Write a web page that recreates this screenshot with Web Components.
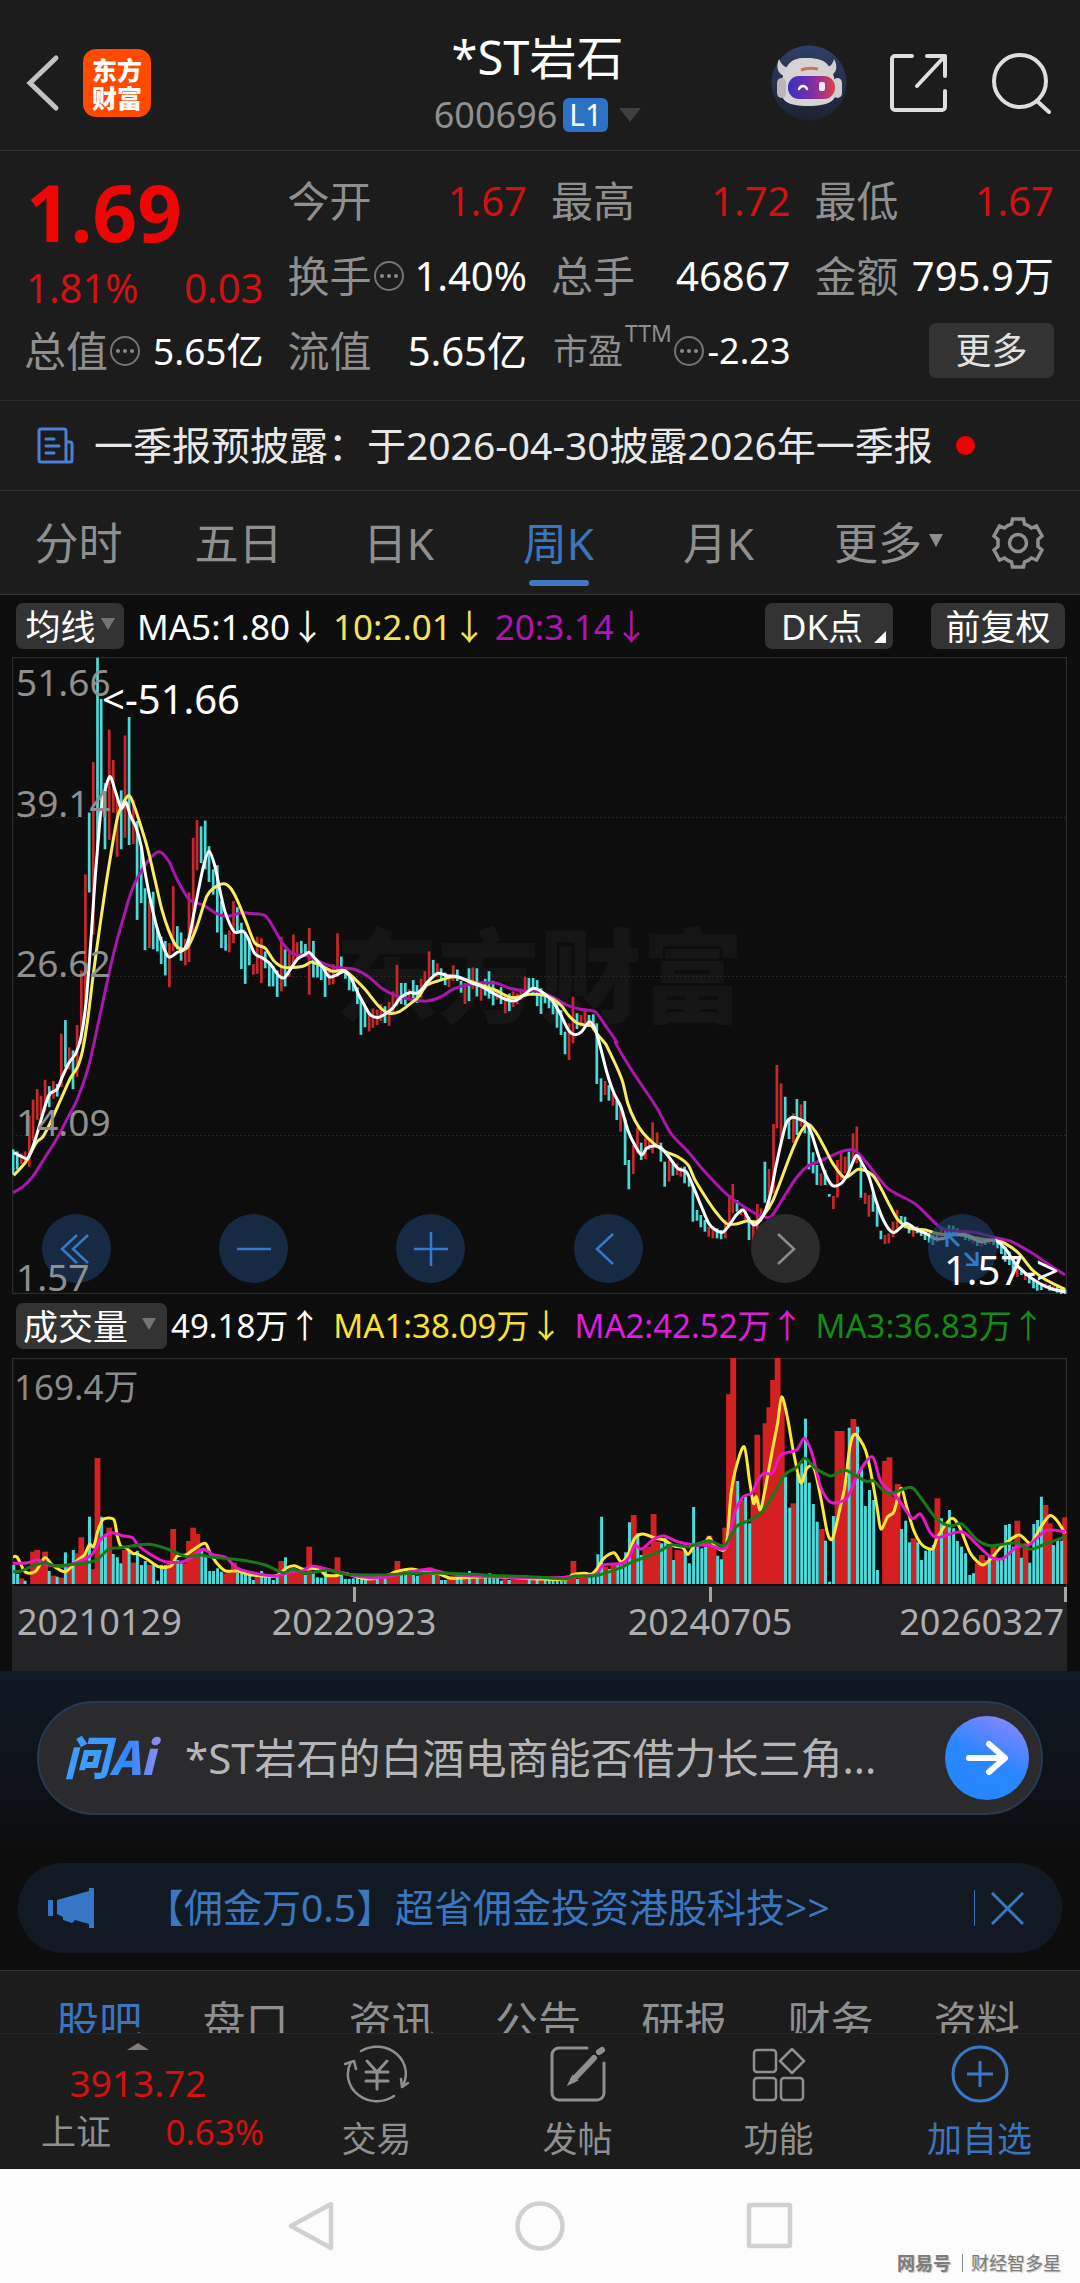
<!DOCTYPE html>
<html lang="zh-CN">
<head>
<meta charset="utf-8">
<meta name="viewport" content="width=device-width, initial-scale=1">
<title>*ST岩石 600696</title>
<style>
  body { margin: 0; background: #0d0d0d; color: #fff; font-family: "Noto Sans", "Noto Sans CJK SC", sans-serif; --panel: #1c1c1c; --line: #333; --chip: #333; --mute: #8f8f8f; --blue: #3a75bd; --red: #d01212; }
</style>
</head>
<body>
<stock-app></stock-app>
<script>
const BASE = `
  * { box-sizing: border-box; }
  :host { display: block; white-space: nowrap; }
  button { all: unset; box-sizing: border-box; cursor: pointer; }
  a { color: inherit; text-decoration: none; }
  svg { display: block; flex: none; fill: none; }
`;
const define = (name, css, html, ready) => customElements.define(name, class extends HTMLElement {
  connectedCallback() {
    const root = this.attachShadow({ mode: 'open' });
    root.innerHTML = `<style>${BASE}${css}</style>${html}`;
    if (ready) ready.call(this, root);
  }
});

/* ---------- header ---------- */
define('stock-header', `
  header { display: grid; grid-template-columns: 1fr auto 1fr; height: 151px; padding: 16px 29px 0 24px; background: var(--panel); border-bottom: 1px solid var(--line); align-items: center; }
  .side { display: flex; align-items: center; }
  .left { gap: 21px; }
  .right { justify-content: flex-end; gap: 42px; }
  .title { padding-top: 8px; }
  .logo { width: 68px; height: 68px; border-radius: 13px; background: #ff4a00; font: 900 25px/28px "Noto Sans CJK SC", sans-serif; text-align: center; padding-top: 6px; white-space: normal; }
  h1 { margin: 0; font-weight: 400; font-size: 47px; line-height: 56px; text-align: center; }
  .code { display: flex; align-items: center; justify-content: center; color: var(--mute); font-size: 36px; line-height: 60px; }
  .code b { font-weight: 400; font-size: 30px; line-height: 34px; background: #2c72c4; color: #fff; border-radius: 6px; padding: 0 6px; margin: 0 11px 0 6px; }
`, `
  <header>
    <div class="side left">
      <button aria-label="返回"><svg width="38" height="58" viewBox="0 0 38 58" stroke="#c2c2c2" stroke-width="5" stroke-linecap="round"><path d="M32 4 6 29l26 25"/></svg></button>
      <div class="logo">东方<br>财富</div>
    </div>
    <div class="title">
      <h1>*ST岩石</h1>
      <div class="code">600696<b>L1</b><svg width="22" height="14" viewBox="0 0 22 14"><path d="M0 0h22L11 14z" fill="#3f3f3f"/></svg></div>
    </div>
    <div class="side right">
      <button aria-label="智能助手"><svg width="76" height="76" viewBox="0 0 76 76">
        <defs><linearGradient id="bg" x2="0" y2="1"><stop stop-color="#2f3f66"/><stop offset="1" stop-color="#1c2230"/></linearGradient>
        <linearGradient id="vis"><stop stop-color="#3c2fc0"/><stop offset=".5" stop-color="#7a2fa8"/><stop offset="1" stop-color="#d8404e"/></linearGradient></defs>
        <circle cx="38" cy="38" r="37.500" fill="url(#bg)"/>
        <path d="M8 14c-3 7-2 14 5 17l9-8c-8 1-12-4-14-9zM63 14c4 7 3 14-4 17l-8-8c7 1 11-4 12-9z" fill="#d0d0d4"/>
        <path d="M17 20c5-7 12-7 20-7 9 0 16 2 20 7 6 7 8 19 8 27 0 9-8 14-28 14S11 56 10 47c0-9 2-21 7-27z" fill="#d6d3d4"/>
        <rect x="6" y="33" width="9" height="20" rx="5" fill="#b9b6ba"/><rect x="62" y="33" width="9" height="20" rx="5" fill="#d0cdd0"/>
        <rect x="17" y="31" width="47" height="23" rx="11" fill="url(#vis)"/>
        <path d="M28 44c2-4 6-4 8 0" stroke="#fff" stroke-width="2.500" stroke-linecap="round"/>
        <rect x="48" y="37" width="6" height="9" rx="2" fill="#f3e6f0"/><path d="M30 25c5-2 11-2 17-1" stroke="#c87850" stroke-width="3"/>
      </svg></button>
      <button aria-label="分享"><svg width="60" height="60" viewBox="0 0 60 60" stroke="#dedede" stroke-width="4" stroke-linecap="round" stroke-linejoin="round"><path d="M23 3H6a3 3 0 0 0-3 3v48a3 3 0 0 0 3 3h47a3 3 0 0 0 3-3V38M38 3h18v20M56 3 28 33"/></svg></button>
      <button aria-label="搜索"><svg width="60" height="62" viewBox="0 0 60 62" stroke="#dedede" stroke-width="4" stroke-linecap="round"><circle cx="29" cy="29" r="26"/><path d="m46 49 12 11"/></svg></button>
    </div>
  </header>
`);

/* ---------- quote ---------- */
define('quote-cell', `
  :host { display: flex; align-items: center; justify-content: space-between; font-size: 40px; line-height: 60px; min-width: 0; }
  .label { display: flex; align-items: center; color: var(--mute); gap: 2px; font-size: 42px; margin-left: -2px; }
  .value { color: #fff; }
  :host([up]) .value { color: var(--red); }
  :host([small]) .value { font-size: 37px; }
  :host([pe]) .value { font-size: 36px; }
  :host([pe]) .label { font-size: 35px; margin-left: 0; }
  ::slotted(sup) { font-size: 23px; line-height: 24px; align-self: flex-start; }
`, `
  <span class="label"><slot name="label"></slot><slot name="sup"></slot></span><span class="value"><slot></slot></span>
`, function (root) {
  if (this.hasAttribute('info')) root.querySelector('.label').insertAdjacentHTML('beforeend',
    '<svg width="30" height="30" viewBox="0 0 30 30"><circle cx="15" cy="15" r="14" stroke="#757575" stroke-width="2"/><g fill="#8a8a8a"><circle cx="8" cy="15" r="2"/><circle cx="15" cy="15" r="2"/><circle cx="22" cy="15" r="2"/></g></svg>');
});

define('quote-panel', `
  .grid { display: grid; grid-template-columns: repeat(4, minmax(0, 1fr)); grid-template-rows: repeat(3, 75px); column-gap: 26px; height: 250px; padding: 12px 26px; background: var(--panel); border-bottom: 1px solid #2b2b2b; }
  .main { grid-row: span 2; }
  .price { color: #ee0606; font-weight: 700; font-size: 78px; line-height: 98px; }
  .chg { display: flex; justify-content: space-between; color: var(--red); font-size: 40px; line-height: 54px; }
  .more { justify-self: end; align-self: center; width: 125px; height: 55px; border-radius: 7px; background: var(--chip); color: #e2e2e2; font-size: 36px; line-height: 50px; text-align: center; }
`, `
  <section class="grid">
    <div class="main"><div class="price">1.69</div><div class="chg"><span>1.81%</span><span>0.03</span></div></div>
    <quote-cell up><span slot="label">今开</span>1.67</quote-cell>
    <quote-cell up><span slot="label">最高</span>1.72</quote-cell>
    <quote-cell up><span slot="label">最低</span>1.67</quote-cell>
    <quote-cell info><span slot="label">换手</span>1.40%</quote-cell>
    <quote-cell><span slot="label">总手</span>46867</quote-cell>
    <quote-cell><span slot="label">金额</span>795.9万</quote-cell>
    <quote-cell small info><span slot="label">总值</span>5.65亿</quote-cell>
    <quote-cell><span slot="label">流值</span>5.65亿</quote-cell>
    <quote-cell pe info><span slot="label">市盈</span><sup slot="sup">TTM</sup>-2.23</quote-cell>
    <button class="more">更多</button>
  </section>
`);

/* ---------- notice ---------- */
define('notice-bar', `
  a { display: flex; align-items: center; height: 90px; padding-left: 37px; background: var(--panel); border-bottom: 1px solid var(--line); color: #e8e8e8; font-size: 39px; }
  span { margin: 0 23px 0 20px; padding-bottom: 6px; }
  i { width: 19px; height: 19px; border-radius: 50%; background: #f40000; }
`, `
  <a href="#notice"><svg width="37" height="37" viewBox="0 0 37 37" stroke="#4d7fd6" stroke-width="3" stroke-linejoin="round" stroke-linecap="round"><path d="M29 35H4a2 2 0 0 1-2-2V4a2 2 0 0 1 2-2h23a2 2 0 0 1 2 2zM29 15h4a2 2 0 0 1 2 2v16a2 2 0 0 1-2 2h-4M9 12h8M9 19h13M9 26h8"/></svg><span>一季报预披露：于2026-04-30披露2026年一季报</span><i></i></a>
`);

/* ---------- period tabs ---------- */
define('period-tabs', `
  nav { display: grid; grid-template-columns: repeat(5, 8fr) 9fr 5fr; height: 104px; background: var(--panel); border-bottom: 1px solid var(--line); color: var(--mute); font-size: 44px; }
  button { display: flex; align-items: center; justify-content: center; gap: 7px; position: relative; padding: 0 3px 4px 0; }
  .on { color: var(--blue); }
  .on::after { content: ""; position: absolute; bottom: 8px; width: 60px; height: 6px; border-radius: 3px; background: #3f78c0; }
  .set { padding: 0 24px 0 0; }
`, `
  <nav>
    <button>分时</button><button>五日</button><button>日K</button><button class="on">周K</button><button>月K</button>
    <button>更多<svg width="14" height="13" viewBox="0 0 14 13"><path d="M0 0h14L7 13z" fill="#8f8f8f"/></svg></button>
    <button class="set" aria-label="设置"><svg width="52" height="52" viewBox="0 0 52 52" stroke="#8f8f8f" stroke-width="3.500"><circle cx="26" cy="26" r="8.500"/><path d="M20.500 2h11l1 5c3 1 5 2 7 4l5-2 5.500 10-4 3.500v7l4 3.500L44.500 43l-5-2c-2 2-4 3-7 4l-1 5h-11l-1-5c-3-1-5-2-7-4l-5 2L2 33l4-3.500v-7L2 19 7.500 9l5 2c2-2 4-3 7-4z"/></svg></button>
  </nav>
`);

/* ---------- chart toolbars ---------- */
const CHIP = `
  .bar { display: flex; align-items: center; padding: 0 15px 0 16px; background: #0d0d0d; }
  .bar > span { padding-bottom: 4px; }
  .chip { display: flex; align-items: center; justify-content: center; height: 46px; padding-bottom: 4px; border-radius: 7px; background: var(--chip); color: #fff; font-size: 35px; }
`;
define('ma-bar', CHIP + `
  .bar { height: 62px; font-size: 35px; gap: 8px; }
  .ma { width: 108px; gap: 5px; margin-right: 5px; }
  .dk { margin-left: auto; width: 128px; position: relative; padding-right: 14px; }
  .dk svg { position: absolute; right: 7px; bottom: 6px; }
  .adj { width: 134px; margin-left: 30px; }
`, `
  <div class="bar">
    <button class="chip ma">均线<svg width="14" height="12" viewBox="0 0 14 12"><path d="M0 0h14L7 12z" fill="#757575"/></svg></button>
    <span>MA5:1.80↓</span><span style="color:#f4e35a">10:2.01↓</span><span style="color:#b413b4">20:3.14↓</span>
    <button class="chip dk">DK点<svg width="12" height="12" viewBox="0 0 12 12"><path d="M12 0v12H0z" fill="#fff"/></svg></button>
    <button class="chip adj">前复权</button>
  </div>
`);
define('volume-bar', CHIP + `
  .bar { height: 64px; font-size: 33px; gap: 12px; }
  .chip { width: 151px; gap: 14px; margin-right: -8px; padding-right: 4px; }
`, `
  <div class="bar">
    <button class="chip">成交量<svg width="14" height="12" viewBox="0 0 14 12"><path d="M0 0h14L7 12z" fill="#757575"/></svg></button>
    <span>49.18万↑</span><span style="color:#f7e136">MA1:38.09万↓</span><span style="color:#dd1edd">MA2:42.52万↑</span><span style="color:#158a15">MA3:36.83万↑</span>
  </div>
`);

/* ---------- series data ----------
   Each block is [offsetX, offsetY, scaleX, scaleY, series]; plotted x = X / scaleX + offsetX. */
const PRICE = {
  origin: [12, 657],
  bars: [
    [0, 640, 2.904, 2.376, 'c38 1210 1270;c50 1215 1258;r62 1220 1245;r73 1215 1245;r85 1130 1252;r96 1092 1190;r108 1067 1140;r119 1083 1130;r131 1045 1120;c143 1060 1110;r155 1048 1090;c166 1055 1085;r178 935 1062;c190 903 1015;r201 968 1020;c212 975 1067;r224 915 1038;r236 785 960;r248 557 860;c259 410 600;r271 290 700;c283 42 500;c294 140 400;c305 340 497;r317 213 475;r329 285 410;r340 370 515;c352 357 497;r363 227 470;c375 183 487;r387 380 485;c398 430 665;c410 490 625;c421 590 737;r434 620 732;c445 598 735;c457 690 740;c468 705 770;c480 715 797;r492 720 825;r503 585 740;c515 680 735;c526 695 762;r538 710 773;r549 600 765;r561 470 700;r572 428 547;c584 443 530;c596 429 545;c607 490 575;c619 545 605;c631 535 695;c643 620 732;c655 700 738;r666 690 742;r678 620 720;c689 635 695;c701 672 782;c712 695 817;c724 710 773;r736 770 795;r747 705 793;r759 708 815;c770 740 780;c782 765 823;c793 775 823;c805 785 848;r817 705 835;c828 735 823;r840 742 800;r852 700 770;r863 718 760;c875 715 745;c887 722 745;r898 684 843;c910 715 802;c922 765 802;c933 775 808;c944 780 848;r956 780 820;r968 770 818;r980 697 800;c991 752 785;c1003 780 805;c1014 795 832;c1026 800 835;c1038 825 865;c1048 850 938;c1060 870 920;r1072 885 930;r1083 875 922;r1095 878 915;r1106 865 905;c1118 870 910;r1130 860 917;r1141 835 885;r1153 772 870;c1165 815 865;c1177 815 868;r1188 830 850;c1200 808 855;c1211 820 862;r1223 805 850;r1234 787 830;r1246 740 820;c1258 760 800;r1270 768 800;c1281 780 810;c1293 790 820;r1304 795 825;r1316 773 810;c1328 783 810;c1339 810 838;r1350 815 865;c1362 780 858;r1373 778 830;c1385 780 847;r1397 815 857;c1409 805 845;c1420 787 852;c1432 810 868;r1443 830 855;c1455 825 865;r1467 840 887;c1479 840 882;r1490 835 872;r1502 840 865;r1513 830 855;r1525 800 845;c1536 803 835;c1548 803 840;c1560 808 870'],
    [480, 880, 3, 3, 'c183 325 402;c195 340 370;c207 345 385;c219 350 403;c231 370 443;c243 390 465;c255 455 523;r267 430 540;r279 350 490;c291 400 447;r303 405 440;r315 385 430;c327 405 440;c340 403 450'],
    [540, 900, 2.904, 3, 'c165 370 552;c177 535 605;r189 543 585;c200 555 602;r212 580 617;c223 600 660;r234 620 695;c247 660 795;c258 780 868;r271 735 822;r283 683 760;c294 728 780;r306 715 777;r317 715 750;r327 667 760;r340 697 745;c351 728 785;c362 785 860;r375 780 845;c386 785 827;r398 790 825;r409 800 830;c420 800 850;c433 830 860;c444 860 965;c456 930 962;c467 945 982;c479 960 995;r490 980 1010;r502 985 1015;c514 985 1015;c526 990 1018;r538 960 1015;r550 885 980;r560 852 940;c572 900 935;r584 925 945;r596 930 960;c607 950 1020;r619 970 1065;r631 912 1005;r642 925 965;c653 785 908;r665 807 930;r678 672 880;r688 495 685;r700 550 735;c712 590 680;c723 655 717;r736 640 728;c746 597 705;r758 613 680;c769 603 700;c781 675 808;c793 757 820;c804 795 855;r816 820 857;c828 810 855;c840 882 890;r852 888 927;r864 780 893;r874 757 840;r886 770 820;c897 755 820;r909 700 790;r920 680 790;c932 790 893;r944 878 912;r955 885 950;c967 880 935;c979 920 980;c990 992 1018;r1002 1005 1032;r1013 1000 1030;r1025 965 1012;r1037 930 985;c1049 948 970;c1060 950 985;c1072 975 1000;r1084 980 1010;c1095 980 1000;c1107 990 1008;c1118 998 1020;c1130 1000 1028;c1141 1003 1035;c1153 1000 1025;r1165 985 1015;c1177 985 1010;c1188 975 1000;c1200 977 1010;c1212 985 1010;r1223 1000 1012;c1235 1000 1020;c1247 1005 1022;r1258 1010 1030;c1270 1010 1038;r1282 1018 1040;c1293 1015 1035;r1305 1015 1032;c1317 1018 1035;c1328 1020 1045;c1340 1025 1062;c1351 1040 1085;c1363 1055 1095;c1374 1070 1120;r1386 1095 1130;c1398 1105 1125;r1409 1115 1140;c1421 1125 1150;c1433 1135 1165;c1444 1145 1172;c1456 1150 1170;r1468 1150 1165;c1480 1155 1172;r1491 1158 1172;c1502 1160 1178;c1514 1165 1183;c1525 1168 1183']
  ],
  lines: {
    '#ab16ab': [
      [0, 640, 2.904, 2.376, '38,1313;65,1300;95,1275;130,1230;165,1185;200,1130;225,1090;255,1020;275,950;300,855;330,745;360,655;385,590;410,550;440,515;463,503;490,525;515,570;550,617;590,630;630,650;660,657;700,648;730,650;770,655;795,685;820,720;850,745;890,750;930,765;970,777;1030,783;1070,800;1110,828;1150,845;1200,855;1240,858;1280,848;1320,828;1370,817'],
      [480, 880, 3, 3, '10,308;50,310;90,325;130,332;170,333;215,350;260,375;300,388;345,395;375,435;410,485'],
      [540, 900, 2.904, 3, '220,430;260,500;295,555;340,625;380,700;430,755;470,805;510,850;550,890;600,925;640,948;670,950;700,905;740,840;775,800;820,780;880,753;915,752;950,790;1010,865;1090,912;1160,980;1200,992;1260,997;1330,1015;1370,1025;1430,1060;1480,1095;1525,1125']],
    '#f8ec62': [
      [0, 640, 2.904, 2.376, '40,1272;75,1240;105,1195;125,1180;150,1140;180,1085;205,1040;225,1015;240,975;255,900;270,800;290,680;310,570;330,470;345,410;373,370;390,395;410,445;430,500;450,570;470,640;490,690;510,725;530,735;545,730;570,685;600,610;620,590;650,579;670,590;690,620;715,670;740,720;770,732;795,762;825,778;880,775;905,765;935,775;965,787;1000,785;1030,805;1060,830;1100,870;1130,887;1160,883;1190,865;1215,848;1240,820;1280,808;1320,800;1370,812'],
      [480, 880, 3, 3, '10,318;45,330;90,352;120,350;150,343;190,345;220,358;245,378;265,405;290,428;315,435;335,438;350,460;375,490'],
      [540, 900, 2.904, 3, '195,440;220,495;240,545;255,610;275,660;300,700;330,730;365,755;400,770;430,795;450,840;480,890;510,935;540,970;570,972;600,963;630,965;650,945;675,905;700,840;725,770;755,700;778,672;800,695;825,740;850,790;885,833;925,808;965,825;990,865;1015,915;1040,960;1075,985;1120,990;1150,1000;1190,1005;1230,1003;1270,1015;1320,1022;1350,1030;1390,1060;1430,1110;1470,1140;1525,1168']],
    '#ffffff': [
      [0, 640, 2.904, 2.376, '40,1218;75,1232;85,1225;105,1180;140,1085;165,1068;180,1040;200,1005;220,982;235,945;250,860;265,700;275,580;285,480;295,395;318,325;335,360;352,400;365,385;380,420;395,445;410,490;420,545;440,630;460,695;488,752;515,742;535,735;550,705;570,620;590,540;607,502;625,540;640,600;655,650;680,693;705,692;720,708;740,745;765,757;785,770;810,798;827,802;845,780;865,757;885,748;898,742;915,757;935,775;955,800;975,797;1000,788;1020,805;1040,840;1060,870;1075,890;1097,897;1125,885;1140,875;1165,848;1190,838;1215,838;1245,810;1272,792;1300,798;1330,800;1370,815'],
      [480, 880, 3, 3, '10,322;40,340;75,357;105,362;135,342;160,325;185,335;215,360;240,400;265,450;285,464;305,455;328,425;345,445'],
      [540, 900, 2.904, 3, '175,440;195,520;215,580;235,620;255,690;275,735;295,765;310,745;330,738;350,742;370,765;400,805;425,815;445,860;465,910;490,970;510,990;530,997;550,975;570,945;590,930;605,955;622,975;640,960;655,930;670,880;685,800;700,730;715,670;733,652;755,658;775,670;790,705;810,770;830,825;850,857;875,850;895,820;918,767;935,790;955,830;975,900;995,955;1015,990;1030,997;1050,980;1065,970;1095,990;1120,1000;1145,1015;1175,1015;1200,1003;1240,1008;1280,1025;1320,1020;1350,1045;1380,1090;1410,1120;1450,1150;1490,1168;1525,1175']]
  }
};
const VOLUME = {
  origin: [12, 1358],
  bars: [
    [0, 1280, 2.904, 3, 'c40 855;c51 882;r62 895;c73 902;r96 815;r108 810;r119 855;r131 815;c143 873;r155 887;c166 890;r178 893;c190 817;r201 860;c213 810;r225 820;r236 772;r248 815;c260 710;r271 868;r283 534;c295 710;c306 770;r317 743;c329 822;c341 832;c351 850;r363 810;c375 810;r387 848;c399 812;c411 855;c422 843;r434 855;c446 855;c458 902;c469 855;c480 855;r492 850;r503 747;c516 840;c526 850;r538 850;r549 783;r561 743;r573 762;c586 812;c597 830;c609 873;c620 873;c632 865;c643 875;r655 880;r667 875;r679 848;c690 878;c702 878;c713 880;c725 885;c736 900;r748 890;c760 873;c771 888;c782 890;c794 900;c805 888;r817 843;c829 832;r841 870;r852 865;r864 870;r875 872;c887 885;r898 800;c910 880;c922 892;c933 893;c945 870;r957 890;r968 885;r980 832;c992 885;c1003 897;c1014 897;c1026 895;c1038 890;c1050 895;c1061 895;r1073 895;r1084 885;c1096 892;r1107 895;c1119 895;r1131 890;r1143 880;r1154 843;c1166 885;c1178 885;r1189 880;c1201 885;c1212 887;r1224 885;r1236 875;r1248 862;c1259 885;r1270 880;c1282 900;c1293 900;r1305 895;r1316 888;c1328 890;c1339 892;r1350 892;c1363 873;r1375 888;c1386 890;r1397 893;c1410 890;c1422 880;c1434 890;c1445 893;c1456 902;r1467 885;c1479 900;r1490 895;r1502 895;r1513 895;r1525 885;c1537 895;r1548 890;c1560 898'],
    [540, 1280, 2.904, 3, 'r2 895;c15 897;c27 899;c38 900;c50 900;c62 900;c73 900;r85 885;r97 843;c109 897;r120 888;r132 885;c144 892;c156 890;c168 823;c179 710;r190 860;c202 867;r213 850;c226 850;c237 845;c249 817;c260 727;r272 705;c284 760;c294 825;r306 805;r317 800;r330 702;r342 785;c353 790;c364 775;r376 795;c388 840;r399 810;r411 812;c422 815;c434 850;c446 681;c458 800;c470 805;c481 800;r492 767;r504 800;c516 827;c527 838;r538 743;r549 343;r561 234;c574 603;r585 660;c597 650;c609 730;r620 650;r631 464;r643 700;r655 430;r666 382;r677 300;r690 234;r702 360;c713 590;c725 683;r736 670;c748 580;c760 550;c771 416;c782 608;c794 672;c805 725;r818 747;c829 782;c841 905;c852 708;r864 453;r876 453;r887 600;c898 443;r910 417;c922 440;c934 562;c945 678;c957 630;c969 660;c980 870;r1002 543;r1015 532;r1027 650;r1039 612;c1050 747;c1062 722;c1073 787;r1085 775;c1097 787;c1108 840;c1120 812;c1131 805;c1142 795;r1154 655;c1166 715;r1177 740;c1189 690;c1201 745;c1212 783;c1224 800;c1236 820;c1248 885;c1259 880;r1271 850;r1283 825;r1294 840;c1305 830;r1317 797;c1329 840;c1340 835;c1352 735;c1363 732;c1375 800;r1386 722;c1398 833;r1410 790;c1422 848;c1434 732;c1445 720;c1456 650;r1468 675;r1480 730;c1491 795;c1503 780;c1515 782;r1525 712']
  ],
  lines: {
    '#ffe63c': [
      [0, 1280, 2.904, 3, '38,830;50,832;70,872;85,880;105,872;130,833;150,853;170,868;190,875;210,858;225,840;245,825;260,793;272,800;285,750;300,718;330,718;340,765;350,798;365,803;385,820;400,822;430,840;460,860;485,862;500,855;515,828;540,825;560,810;595,790;610,818;630,850;655,873;690,873;730,885;800,888;830,865;855,857;880,868;905,865;930,870;945,885;975,887;1000,880;1040,892;1070,897;1120,888;1150,875;1195,867;1240,877;1270,880;1310,895;1370,892;1430,890;1568,897'],
      [540, 1280, 2.904, 3, '75,898;95,884;130,880;150,882;170,860;185,835;215,818;235,845;255,825;275,775;300,762;335,775;360,780;390,798;415,803;430,823;450,795;480,785;492,772;510,800;540,800;555,640;570,560;593,500;608,600;620,670;628,650;640,690;655,620;675,510;690,430;702,350;720,420;735,510;757,608;775,565;795,563;815,650;835,760;850,775;870,690;885,620;900,500;915,463;945,510;965,600;980,690;990,747;1010,710;1028,695;1048,625;1065,680;1085,750;1110,795;1140,807;1155,770;1195,715;1220,745;1250,820;1285,855;1315,830;1340,800;1390,765;1425,790;1455,740;1480,707;1500,720;1525,760']],
    '#e818c8': [
      [0, 1280, 2.904, 3, '38,850;80,848;110,840;140,855;190,858;220,848;250,835;270,820;295,775;325,758;355,767;385,773;400,795;440,825;480,845;530,845;560,830;590,808;620,825;655,832;690,865;740,880;800,888;840,877;880,872;905,858;950,868;990,878;1050,890;1120,892;1170,880;1245,868;1290,878;1370,888;1568,893'],
      [540, 1280, 2.904, 3, '75,892;130,888;165,882;185,855;240,850;260,830;275,795;295,807;330,778;360,768;400,785;450,795;490,795;540,803;565,700;590,650;615,640;630,605;650,580;675,580;700,525;745,510;768,475;790,520;815,620;845,667;890,655;925,580;965,530;990,605;1035,650;1080,715;1105,702;1135,760;1160,772;1225,755;1265,790;1310,832;1345,835;1385,800;1420,795;1470,752;1525,755']],
    '#177a17': [
      [0, 1280, 2.904, 3, '38,875;60,873;90,860;130,848;160,857;240,850;280,840;315,808;350,803;430,793;490,808;540,830;580,825;620,832;700,840;770,855;820,878;850,868;890,880;950,870;1000,882;1100,885;1200,880;1300,880;1450,887;1568,892'],
      [540, 1280, 2.904, 3, '75,897;100,888;160,887;230,865;270,845;340,818;380,795;430,800;490,782;535,797;570,740;610,720;645,695;680,640;710,585;745,562;770,535;800,565;845,588;885,570;945,603;970,603;1010,640;1075,622;1100,645;1150,715;1190,738;1225,732;1270,780;1310,797;1380,788;1425,808;1460,795;1525,770']]
  }
};
const mapper = (origin, [ox, oy, kx, ky]) => [
  X => (X / kx + ox - origin[0]).toFixed(1),
  Y => (Y / ky + oy - origin[1]).toFixed(1)
];
/* Catmull-Rom spline through the points of all blocks. */
const curves = chart => Object.entries(chart.lines).map(([color, blocks]) => {
  const p = blocks.flatMap(b => {
    const [fx, fy] = mapper(chart.origin, b);
    return b[4].split(';').map(s => s.split(',')).map(([x, y]) => [+fx(x), +fy(y)]);
  });
  let d = `M${p[0]}`;
  for (let i = 0; i < p.length - 1; i++) {
    const a = p[i - 1] || p[i], b = p[i], c = p[i + 1], e = p[i + 2] || c;
    d += `C${(b[0] + (c[0] - a[0]) / 7).toFixed(1)},${(b[1] + (c[1] - a[1]) / 7).toFixed(1)} ${(c[0] - (e[0] - b[0]) / 7).toFixed(1)},${(c[1] - (e[1] - b[1]) / 7).toFixed(1)} ${c}`;
  }
  return `<path d="${d}" stroke="${color}" stroke-width="3" stroke-linejoin="round"/>`;
}).join('');
const candles = chart => chart.bars.map(b => {
  const [fx, fy] = mapper(chart.origin, b);
  return b[4].split(';').map(s => {
    const [x, y1, y2] = s.slice(1).split(' ');
    return `<path d="M${fx(x)} ${fy(y1)}V${fy(y2)}" stroke="${s[0] === 'r' ? '#c8282a' : '#4adada'}" stroke-width="2.700"/>`;
  }).join('');
}).join('');
const volumes = chart => ['r', 'c'].map(kind => chart.bars.map(b => {
  const [fx, fy] = mapper(chart.origin, b);
  return b[4].split(';').filter(s => s[0] === kind).map(s => {
    const [x, y] = s.slice(1).split(' ');
    return `<path d="M${fx(x)} ${fy(y)}V226" stroke="${kind === 'r' ? '#d52022' : '#4adada'}" stroke-width="${kind === 'r' ? 5.8 : 3}"/>`;
  }).join('');
}).join('')).join('');

define('price-chart', `
  .pane { position: relative; height: 637px; margin: 0 13px 0 12px; }
  .pane > svg { position: absolute; inset: 0; width: 100%; height: 100%; }
  .mark { position: absolute; inset: 0; display: grid; place-items: center; padding-bottom: 10px; font: 900 102px "Noto Sans CJK SC", sans-serif; color: #151515; }
  .axis span { position: absolute; left: 4px; font-size: 37px; line-height: 40px; color: var(--mute); }
  .tag { position: absolute; font-size: 40px; line-height: 40px; color: #fff; }
  .tools { position: absolute; left: 30px; right: 70px; bottom: 11px; display: flex; justify-content: space-between; }
  .tools button { width: 69px; height: 69px; border-radius: 50%; background: rgba(29, 59, 97, .65); display: grid; place-items: center; }
  .tools .off { background: #2b2b2b; }
`, `
  <div class="pane">
    <div class="mark">东方财富</div>
    <svg viewBox="0 0 1055 637" preserveAspectRatio="none">
      <path d="M.5.500h1054v636H.5z" stroke="#2b2b2b" stroke-width="1.500"/>
      <path d="M0 160.500h1055M0 319.500h1055M0 478.500h1055" stroke="#262626" stroke-dasharray="2 2"/>
      ${candles(PRICE)}${curves(PRICE)}
    </svg>
    <div class="tools">
      <button aria-label="最早"><svg width="34" height="34" viewBox="0 0 34 34" stroke="#3878c8" stroke-width="2.500"><path d="M17 3 2 17l15 14M28 3 13 17l15 14"/></svg></button>
      <button aria-label="缩小"><svg width="34" height="34" viewBox="0 0 34 34" stroke="#3878c8" stroke-width="2.500"><path d="M0 17h34"/></svg></button>
      <button aria-label="放大"><svg width="34" height="34" viewBox="0 0 34 34" stroke="#3878c8" stroke-width="2.500"><path d="M0 17h34M17 0v34"/></svg></button>
      <button aria-label="左移"><svg width="34" height="34" viewBox="0 0 34 34" stroke="#3878c8" stroke-width="2.500"><path d="M22 2 6 17l16 15"/></svg></button>
      <button class="off" aria-label="右移"><svg width="34" height="34" viewBox="0 0 34 34" stroke="#8c8c8c" stroke-width="2.500"><path d="m10 2 16 15-16 15"/></svg></button>
      <button aria-label="全屏"><svg width="34" height="34" viewBox="0 0 34 34" stroke="#3878c8" stroke-width="3"><path d="M13 2H2v13M2 2l12 12M21 33h11V20M32 33 20 21"/></svg></button>
    </div>
    <div class="axis"><span style="top:5px">51.66</span><span style="top:126px">39.14</span><span style="top:286px">26.62</span><span style="top:445px">14.09</span><span style="top:600px">1.57</span></div>
    <span class="tag" style="left:90px;top:22px">&lt;-51.66</span>
    <span class="tag" style="right:8px;bottom:4px">1.57-&gt;</span>
  </div>
`);
define('volume-chart', `
  .pane { position: relative; height: 228px; margin: 0 13px 0 12px; }
  svg { position: absolute; inset: 0; width: 100%; height: 100%; }
  span { position: absolute; left: 2px; top: 9px; font-size: 35px; line-height: 40px; color: #8a8a8a; }
  .dates { display: grid; grid-template-columns: 164fr 356fr 356fr 179fr; height: 85px; margin: 0 13px 0 12px; background: #242426; color: #aeaeb0; font-size: 36px; line-height: 72px; }
  .dates div { position: relative; min-width: 0; text-align: center; }
  .dates div:first-child { text-align: left; padding-left: 5px; }
  .dates div:last-child { text-align: right; padding-right: 3px; }
  .dates div + div::before { content: ""; position: absolute; top: 1px; left: calc(50% - 1px); width: 3px; height: 15px; background: #a5a5a5; }
  .dates div:last-child::before { left: auto; right: 0; }
`, `
  <div class="pane">
    <svg viewBox="0 0 1055 228" preserveAspectRatio="none">
      <path d="M.5 228V.5h1054V228" stroke="#2e2e2e" stroke-width="1.500"/>
      ${volumes(VOLUME)}${curves(VOLUME)}
    </svg>
    <span>169.4万</span>
  </div>
  <div class="dates"><div>20210129</div><div>20220923</div><div>20240705</div><div>20260327</div></div>
`);

/* ---------- AI question ---------- */
define('ask-ai', `
  section { padding: 30px 37px 48px; background: linear-gradient(#101a25, #0d0f12 75%, #0c0c0c); }
  a { display: flex; align-items: center; height: 114px; padding: 0 12px 0 25px; border: 2px solid #263b52; border-radius: 57px; background: #2b2b2d; color: #b6b6b8; font-size: 42px; }
  span { padding-bottom: 6px; }
  b { font: italic 900 46px/60px "Noto Sans CJK SC", sans-serif; width: 104px; padding-bottom: 6px; margin-right: 17px; background: linear-gradient(90deg, #3f9cff 40%, #2f86ff 60%, #a68cf0); background-clip: text; -webkit-background-clip: text; color: transparent; }
  i { display: grid; place-items: center; width: 84px; height: 84px; margin-left: auto; border-radius: 50%; background: linear-gradient(205deg, #9a86ff, #2b87ff 50%, #2386ff); }
`, `
  <section><a href="#ask"><b>问Ai</b><span>*ST岩石的白酒电商能否借力长三角...</span><i><svg width="44" height="38" viewBox="0 0 44 38" stroke="#fff" stroke-width="6" stroke-linecap="round" stroke-linejoin="round"><path d="M4 19h36M24 5l16 14-16 14"/></svg></i></a></section>
`);

/* ---------- promo ---------- */
define('promo-bar', `
  :host { padding: 0 18px 17px; }
  div { display: flex; align-items: center; height: 90px; padding: 0 38px 0 30px; border-radius: 45px; background: linear-gradient(#111b23, #121824); color: #3b76c0; font-size: 39px; }
  a { margin-left: 51px; padding-bottom: 6px; }
  i { margin: 0 16px 0 auto; width: 1px; height: 36px; background: #3b76c0; }
`, `
  <div><svg width="46" height="40" viewBox="0 0 46 40"><path d="M0 12h5v16H0zM9 12l32-9V0h5v40h-5v-4l-14-4-3 3-9-3v-3l-6-3z" fill="#3577c6"/></svg><a href="#promo">【佣金万0.5】超省佣金投资港股科技&gt;&gt;</a><i></i><button aria-label="关闭"><svg width="33" height="33" viewBox="0 0 33 33" stroke="#3b76c0" stroke-width="3"><path d="m1 1 31 31M32 1 1 32"/></svg></button></div>
`);

/* ---------- info tabs ---------- */
define('info-tabs', `
  nav { display: grid; grid-template-columns: repeat(7, 1fr); height: 63px; padding: 21px 30px 0 26px; overflow: hidden; background: var(--panel); border-top: 1px solid var(--line); color: var(--mute); font-size: 43px; line-height: 60px; }
  button { text-align: center; }
  .on { color: var(--blue); }
`, `
  <nav><button class="on">股吧</button><button>盘口</button><button>资讯</button><button>公告</button><button>研报</button><button>财务</button><button>资料</button></nav>
`);

/* ---------- bottom bar ---------- */
define('bottom-bar', `
  footer { display: grid; grid-template-columns: 276fr repeat(4, 201fr); height: 136px; background: var(--panel); border-top: 1px solid #262626; color: var(--mute); font-size: 35px; }
  .index { padding: 9px 12px 0 0; display: grid; justify-items: center; grid-template-rows: 7px 64px 36px; color: var(--red); }
  .index svg { margin-left: 12px; }
  .index strong { font-weight: 400; font-size: 37px; line-height: 66px; margin-left: 12px; }
  .index div { width: 100%; display: flex; justify-content: space-between; padding: 0 0 0 41px; font-size: 35px; line-height: 36px; }
  .index span { color: var(--mute); }
  .item { display: flex; flex-direction: column; align-items: center; padding-top: 11px; }
  .item span { line-height: 40px; margin-top: 16px; }
  .item:last-child { color: var(--blue); }
`, `
  <footer>
    <button class="index"><svg width="22" height="7" viewBox="0 0 22 7"><path d="m0 7 11-7 11 7z" fill="#7c7c7c"/></svg><strong>3913.72</strong><div><span>上证</span>0.63%</div></button>
    <button class="item"><svg width="66" height="58" viewBox="0 0 66 58" stroke="#8f8f8f" stroke-width="2.500" stroke-linecap="round" stroke-linejoin="round"><path d="M17 6a29 27 0 0 1 41 36M58 42l-1-8M58 42l6-4M50 51A29 27 0 0 1 7 17M1 19l9-3 2 8"/><path d="m23 16 10 11 10-11M33 27v17M22 27h22M22 36h22" stroke-width="3"/></svg><span>交易</span></button>
    <button class="item"><svg width="56" height="58" viewBox="0 0 56 58" stroke="#8f8f8f" stroke-width="3" stroke-linecap="round"><path d="M37 3H9a7 7 0 0 0-7 7v38a7 7 0 0 0 7 7h38a7 7 0 0 0 7-7V18"/><path d="m23 35 21-22M49 7l3-2" stroke-width="6"/><path d="m20 38 6-3-3-3z" fill="#8f8f8f"/></svg><span>发帖</span></button>
    <button class="item"><svg width="54" height="58" viewBox="0 0 54 58" stroke="#8f8f8f" stroke-width="2.500" stroke-linejoin="round"><rect x="2" y="5" width="22" height="22" rx="3"/><rect x="2" y="33" width="22" height="22" rx="3"/><rect x="29" y="33" width="22" height="22" rx="3"/><path d="M40 4 52 16 40 28 28 16z"/></svg><span>功能</span></button>
    <button class="item"><svg width="58" height="58" viewBox="0 0 58 58" stroke="#3a78c6" stroke-width="3"><circle cx="29" cy="29" r="27"/><path d="M16 29h26M29 16v26"/></svg><span>加自选</span></button>
  </footer>
`);

/* ---------- system navigation ---------- */
define('system-nav', `
  nav { position: relative; display: flex; align-items: center; justify-content: center; gap: 180px; height: 114px; background: #fcfcfc; }
  p { position: absolute; right: 19px; bottom: 8px; margin: 0; display: flex; align-items: center; font-size: 18px; line-height: 24px; color: #7c7c7c; text-shadow: 1px 1px 1px #bbb; }
  b { font-weight: 700; }
  i { width: 1px; height: 18px; margin: 0 8px 0 11px; background: #888; }
`, `
  <nav>
    <button aria-label="返回"><svg width="50" height="50" viewBox="0 0 50 50" stroke="#d0d0d0" stroke-width="4.500" stroke-linejoin="round"><path d="M46 3v44L6 25z"/></svg></button>
    <button aria-label="主页"><svg width="50" height="50" viewBox="0 0 50 50" stroke="#d0d0d0" stroke-width="4.500"><circle cx="25" cy="25" r="22.500"/></svg></button>
    <button aria-label="最近任务"><svg width="50" height="50" viewBox="0 0 50 50" stroke="#d0d0d0" stroke-width="4.500" stroke-linejoin="round"><rect x="4" y="4" width="41" height="41" rx="1"/></svg></button>
    <p><b>网易号</b><i></i><span>财经智多星</span></p>
  </nav>
`);

define('stock-app', '', `
  <stock-header></stock-header><quote-panel></quote-panel><notice-bar></notice-bar><period-tabs></period-tabs>
  <ma-bar></ma-bar><price-chart></price-chart><volume-bar></volume-bar><volume-chart></volume-chart>
  <ask-ai></ask-ai><promo-bar></promo-bar><info-tabs></info-tabs><bottom-bar></bottom-bar><system-nav></system-nav>
`);
</script>
</body>
</html>
